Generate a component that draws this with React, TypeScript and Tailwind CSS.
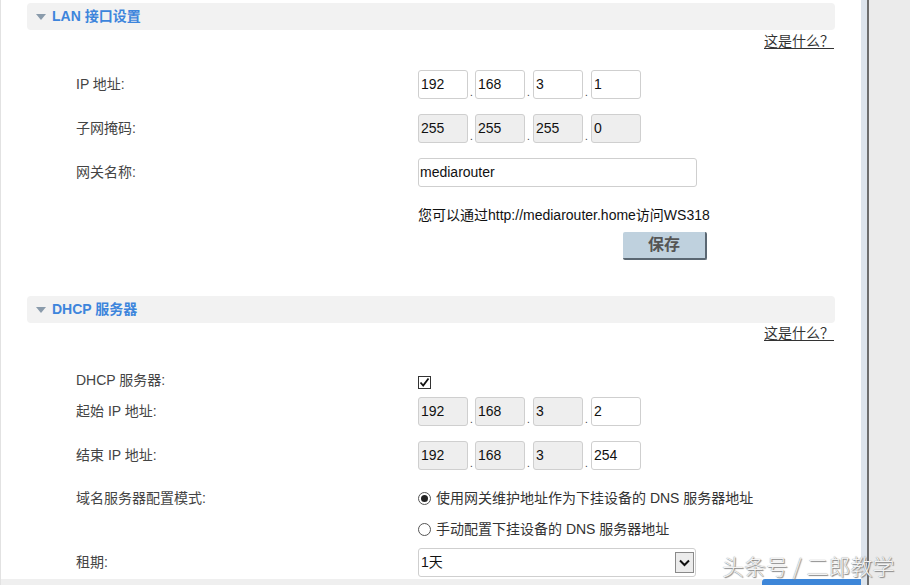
import React from "react";

const font = { fontFamily: '"Liberation Sans", Arial, "Noto Sans CJK SC", sans-serif' };

function Box({ v, disabled }: { v: string; disabled?: boolean }) {
  return (
    <div
      className={`w-[50px] h-[29px] border border-[#cfcfcf] rounded-[3px] flex items-center pl-[2px] text-[14px] text-[#111] ${
        disabled ? "bg-[#eeeeee]" : "bg-white"
      }`}
    >
      {v}
    </div>
  );
}

function Dot() {
  return <div className="w-[7px] h-[29px] flex items-end justify-center pb-[1px] text-[10px] leading-none text-[#333]">.</div>;
}

function IpRow({ vals, dis }: { vals: string[]; dis: boolean[] }) {
  return (
    <div className="flex">
      <Box v={vals[0]} disabled={dis[0]} />
      <Dot />
      <Box v={vals[1]} disabled={dis[1]} />
      <Dot />
      <div className="w-[1px]" />
      <Box v={vals[2]} disabled={dis[2]} />
      <Dot />
      <div className="w-[1px]" />
      <Box v={vals[3]} disabled={dis[3]} />
    </div>
  );
}

function Header({ title }: { title: string }) {
  return (
    <div className="ml-[26px] w-[808px] h-[28px] bg-[#f2f2f2] rounded-[4px] flex items-center pl-[9px]">
      <svg width="10" height="6" viewBox="0 0 10 6" className="mt-[1px]">
        <polygon points="0,0 10,0 5,6" fill="#8a9bab" />
      </svg>
      <span className="ml-[6px] text-[14px] font-bold text-[#3d85dc]">{title}</span>
    </div>
  );
}

function Link() {
  return (
    <div className="w-[833px] h-[23px] flex items-center justify-end">
      <span className="text-[14px] text-[#333] underline underline-offset-[2px]">这是什么？</span>
    </div>
  );
}

function Row({ label, h, mt, children }: { label: string; h: string; mt: string; children?: React.ReactNode }) {
  return (
    <div className={`flex items-center pl-[75px] ${h} ${mt}`}>
      <div className="w-[342px] text-[14px] text-[#444]">{label}</div>
      {children}
    </div>
  );
}

function Radio({ on }: { on?: boolean }) {
  return (
    <div className="w-[13px] h-[13px] rounded-full border border-[#555] bg-white flex items-center justify-center">
      {on && <div className="w-[7px] h-[7px] rounded-full bg-[#222]" />}
    </div>
  );
}

export default function App() {
  return (
    <div className="w-[910px] h-[585px] overflow-hidden flex bg-white relative" style={font}>
      <div className="w-[861px] h-[585px] flex flex-col border-l border-[#e2e2e2]">
        <div className="h-[3px]" />
        <Header title="LAN 接口设置" />
        <Link />
        <Row label="IP 地址:" h="h-[29px]" mt="mt-[17px]">
          <IpRow vals={["192", "168", "3", "1"]} dis={[false, false, false, false]} />
        </Row>
        <Row label="子网掩码:" h="h-[29px]" mt="mt-[15px]">
          <IpRow vals={["255", "255", "255", "0"]} dis={[true, true, true, true]} />
        </Row>
        <Row label="网关名称:" h="h-[29px]" mt="mt-[15px]">
          <div className="w-[279px] h-[29px] border border-[#cfcfcf] rounded-[3px] flex items-center pl-[1px] text-[14px] text-[#111]">
            mediarouter
          </div>
        </Row>
        <Row label="" h="h-[20px]" mt="mt-[19px]">
          <span className="text-[14px] text-[#111] whitespace-nowrap">您可以通过http://mediarouter.home访问WS318</span>
        </Row>
        <div className="mt-[6px] h-[28px] pl-[622px] flex">
          <div className="w-[84px] h-[28px] bg-[#bfd1de] rounded-[2px] border-r-2 border-b-2 border-[#5a6772] flex items-center justify-center text-[16px] font-bold text-[#555]">
            保存
          </div>
        </div>
        <div className="h-[37px]" />
        <Header title="DHCP 服务器" />
        <Link />
        <Row label="DHCP 服务器:" h="h-[20px]" mt="mt-[25px]">
          <div className="w-[13px] h-[13px] border border-[#333] bg-white flex items-center justify-center mt-[4px]">
            <svg width="11" height="11" viewBox="0 0 11 11">
              <path d="M1.5 5.5 L4.2 8.5 L9.5 1.5" stroke="#111" strokeWidth="1.8" fill="none" />
            </svg>
          </div>
        </Row>
        <Row label="起始 IP 地址:" h="h-[29px]" mt="mt-[7px]">
          <IpRow vals={["192", "168", "3", "2"]} dis={[true, true, true, false]} />
        </Row>
        <Row label="结束 IP 地址:" h="h-[29px]" mt="mt-[15px]">
          <IpRow vals={["192", "168", "3", "254"]} dis={[true, true, true, false]} />
        </Row>
        <Row label="域名服务器配置模式:" h="h-[20px]" mt="mt-[18px]">
          <div className="flex items-center gap-[5px] text-[14px] text-[#333] whitespace-nowrap">
            <Radio on />
            <span>使用网关维护地址作为下挂设备的 DNS 服务器地址</span>
          </div>
        </Row>
        <Row label="" h="h-[20px]" mt="mt-[11px]">
          <div className="flex items-center gap-[5px] text-[14px] text-[#333] whitespace-nowrap">
            <Radio />
            <span>手动配置下挂设备的 DNS 服务器地址</span>
          </div>
        </Row>
        <Row label="租期:" h="h-[29px]" mt="mt-[9px]">
          <div className="w-[278px] h-[29px] border border-[#cfcfcf] rounded-[3px] flex items-center justify-between pl-[2px] pr-[1px] text-[14px] text-[#111]">
            <span>1天</span>
            <div className="w-[19px] h-[21px] border border-[#8a8a8a] bg-[#ececec] flex items-center justify-center">
              <svg width="11" height="8" viewBox="0 0 11 8">
                <path d="M1 1.5 L5.5 6 L10 1.5" stroke="#111" strokeWidth="2" fill="none" />
              </svg>
            </div>
          </div>
        </Row>
        <div className="mt-[2px] h-[6px] flex">
          <div className="w-[761px] bg-[#efefef]" />
          <div className="flex-1 bg-[#3d86d8] rounded-tl-[3px]" />
        </div>
      </div>
      <div className="w-[6px] h-full bg-[#dde4ec]" />
      <div className="w-[2px] h-full bg-[#6e6e6e]" />
      <div className="flex-1 h-full bg-[#ebebeb]" />
      <div className="absolute left-[722px] top-[549px] text-[22px] text-[#f4f4f4] whitespace-nowrap [text-shadow:0_0_1px_#777,1px_1px_1px_#888]" style={{ fontFamily: '"Noto Sans CJK SC", sans-serif', fontWeight: 300 }}>
        头条号 / 二郎教学
      </div>
    </div>
  );
}
